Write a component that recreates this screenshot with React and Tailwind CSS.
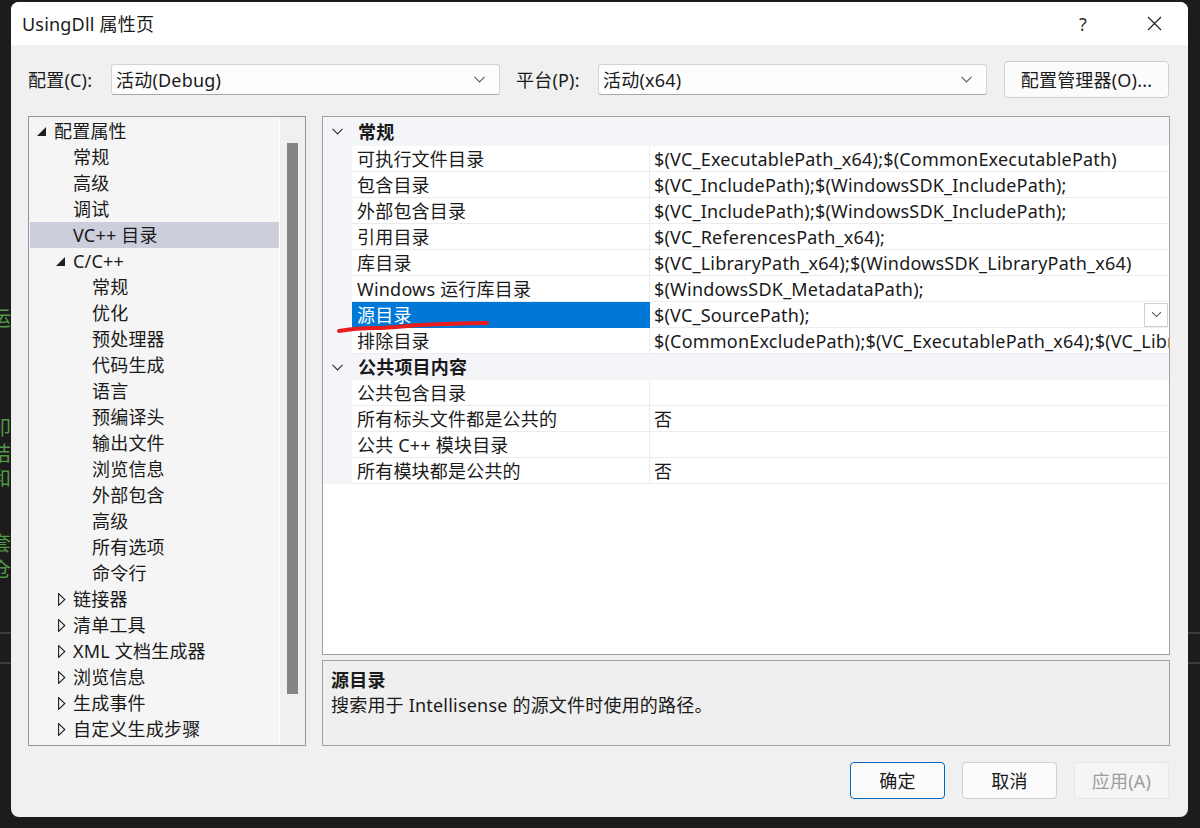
import React from 'react';

const TREE = [
  { label: '配置属性', level: 0, state: 'open' },
  { label: '常规', level: 1 },
  { label: '高级', level: 1 },
  { label: '调试', level: 1 },
  { label: 'VC++ 目录', level: 1, selected: true },
  { label: 'C/C++', level: 1, state: 'open' },
  { label: '常规', level: 2 },
  { label: '优化', level: 2 },
  { label: '预处理器', level: 2 },
  { label: '代码生成', level: 2 },
  { label: '语言', level: 2 },
  { label: '预编译头', level: 2 },
  { label: '输出文件', level: 2 },
  { label: '浏览信息', level: 2 },
  { label: '外部包含', level: 2 },
  { label: '高级', level: 2 },
  { label: '所有选项', level: 2 },
  { label: '命令行', level: 2 },
  { label: '链接器', level: 1, state: 'closed' },
  { label: '清单工具', level: 1, state: 'closed' },
  { label: 'XML 文档生成器', level: 1, state: 'closed' },
  { label: '浏览信息', level: 1, state: 'closed' },
  { label: '生成事件', level: 1, state: 'closed' },
  { label: '自定义生成步骤', level: 1, state: 'closed' },
];

const INDENT = { 0: 'pl-[7px]', 1: 'pl-[26px]', 2: 'pl-[45px]' };

const GENERAL = [
  ['可执行文件目录', '$(VC_ExecutablePath_x64);$(CommonExecutablePath)'],
  ['包含目录', '$(VC_IncludePath);$(WindowsSDK_IncludePath);'],
  ['外部包含目录', '$(VC_IncludePath);$(WindowsSDK_IncludePath);'],
  ['引用目录', '$(VC_ReferencesPath_x64);'],
  ['库目录', '$(VC_LibraryPath_x64);$(WindowsSDK_LibraryPath_x64)'],
  ['Windows 运行库目录', '$(WindowsSDK_MetadataPath);'],
  ['源目录', '$(VC_SourcePath);', true],
  ['排除目录', '$(CommonExcludePath);$(VC_ExecutablePath_x64);$(VC_LibraryPath_x64)'],
];

const PUBLIC = [
  ['公共包含目录', ''],
  ['所有标头文件都是公共的', '否'],
  ['公共 C++ 模块目录', ''],
  ['所有模块都是公共的', '否'],
];

// 背景里露出来的一点绿色代码（被对话框挡住，只剩边角）
const BG_GLYPHS = [
  { t: '“', top: 'top-[264px]' },
  { t: '运', top: 'top-[309px]' },
  { t: '印', top: 'top-[418px]' },
  { t: '拮', top: 'top-[444px]' },
  { t: '和', top: 'top-[469px]' },
  { t: '套', top: 'top-[534px]' },
  { t: '仓', top: 'top-[560px]' },
];

function Chevron({ className = '' }) {
  return (
    <svg width="11" height="7" viewBox="0 0 11 7" className={className}>
      <path d="M0.5 0.8 L5.5 5.8 L10.5 0.8" fill="none" stroke="currentColor" strokeWidth="1.2" />
    </svg>
  );
}

function Select({ value }) {
  return (
    <div className="w-[389px] shrink-0 h-[31px] flex items-center justify-between pl-[4px] pr-[14px] bg-[#fdfdfd] border border-[#d4d4d4] border-b-[#a8a8a8] rounded-[3px]">
      <span>{value}</span>
      <Chevron className="text-[#606060]" />
    </div>
  );
}

function TreeRow({ item }) {
  return (
    <div
      className={`h-[26px] flex items-center ${INDENT[item.level]} ${
        item.selected ? 'bg-[#cccedb]' : ''
      }`}
    >
      <span className="w-[17px] h-[26px] flex items-center">
        {item.state === 'open' && (
          <svg width="9" height="9" viewBox="0 0 9 9" className="mt-[1px]">
            <polygon points="9,0 9,9 0,9" fill="#1e1e1e" />
          </svg>
        )}
        {item.state === 'closed' && (
          <svg width="8" height="13" viewBox="0 0 8 13" className="ml-[2px]">
            <polygon points="0.6,0.6 6.8,6.5 0.6,12.4" fill="none" stroke="#1e1e1e" strokeWidth="1.1" />
          </svg>
        )}
      </span>
      <span className="whitespace-nowrap">{item.label}</span>
    </div>
  );
}

function CategoryRow({ label, tall }) {
  return (
    <div className={`flex items-center bg-[#f3f5f9] ${tall ? 'h-[29px]' : 'h-[26px]'}`}>
      <span className="w-[29px] flex justify-center">
        <Chevron className="text-[#333]" />
      </span>
      <span className="pl-[6px] font-bold">{label}</span>
    </div>
  );
}

function PropRow({ name, value, selected }) {
  return (
    <div className="flex h-[26px]">
      <div className="w-[29px] bg-[#f3f5f9] shrink-0" />
      <div
        className={`w-[298px] shrink-0 flex items-center pl-[5px] whitespace-nowrap ${
          selected ? 'bg-[#0078d7] text-white' : 'bg-white border-b border-r border-[#ececec]'
        }`}
      >
        {name}
      </div>
      <div className="flex-1 min-w-0 flex items-center justify-between bg-white border-b border-[#ececec] pl-[4px] overflow-hidden">
        <span className="whitespace-nowrap">{value}</span>
        {selected && (
          <span className="shrink-0 w-[24px] h-[24px] mr-[1px] flex items-center justify-center bg-white border border-[#cfcfcf]">
            <Chevron className="text-[#555] scale-90" />
          </span>
        )}
      </div>
    </div>
  );
}

function Button({ children, kind }) {
  const cls =
    kind === 'primary'
      ? 'border-[#0067c0] bg-[#fbfbfb] text-[#1a1a1a]'
      : kind === 'disabled'
      ? 'border-[#e6e6e6] bg-[#f5f5f5] text-[#9d9d9d]'
      : 'border-[#d0d0d0] bg-[#fbfbfb] text-[#1a1a1a]';
  return (
    <div className={`w-[95px] h-[37px] flex items-center justify-center rounded-[4px] border ${cls}`}>
      {children}
    </div>
  );
}

export default function App() {
  return (
    <div className="relative w-[1200px] h-[828px] overflow-hidden bg-[#1c1c1c] pt-[2px] pl-[11px] font-['Noto_Sans','Noto_Sans_CJK_SC',sans-serif] text-[18px] leading-none tracking-[0.2px] text-[#1a1a1a]">
      {/* 背景装饰 */}
      {BG_GLYPHS.map((g) => (
        <span key={g.top} className={`absolute left-[-9px] ${g.top} text-[20px] text-[#4f9a44]`}>
          {g.t}
        </span>
      ))}
      <div className="absolute left-0 top-[632px] w-[11px] h-[2px] bg-[#3b3b3b]" />
      <div className="absolute left-0 top-[662px] w-[11px] h-[2px] bg-[#3b3b3b]" />
      <div className="absolute right-0 top-[632px] w-[12px] h-[2px] bg-[#3b3b3b]" />
      <div className="absolute right-0 top-[662px] w-[12px] h-[2px] bg-[#3b3b3b]" />

      {/* 对话框 */}
      <div className="relative w-[1177px] h-[815px] rounded-[8px] bg-[#f0f0f0] overflow-hidden flex flex-col">
        <div className="h-[43px] bg-white flex items-center pl-[11px] pr-[26px]">
          <span className="flex-1">UsingDll 属性页</span>
          <span className="text-[#333] mr-[60px]">?</span>
          <svg width="15" height="15" viewBox="0 0 15 15">
            <path d="M1 1 L14 14 M14 1 L1 14" stroke="#222" strokeWidth="1.2" />
          </svg>
        </div>

        <div className="flex-1 min-w-0 flex flex-col pl-[17px] pr-[18px]">
          <div className="mt-[16px] h-[37px] flex items-center">
            <span className="w-[83px] shrink-0">配置(C):</span>
            <Select value="活动(Debug)" />
            <span className="w-[82px] shrink-0 ml-[16px]">平台(P):</span>
            <Select value="活动(x64)" />
            <div className="ml-[17px] w-[165px] shrink-0 h-[37px] flex items-center justify-center rounded-[4px] border border-[#d0d0d0] bg-[#fbfbfb]">
              配置管理器(O)...
            </div>
          </div>

          <div className="mt-[18px] h-[630px] flex gap-[16px]">
            {/* 左侧树 */}
            <div className="w-[278px] shrink-0 border border-[#8f96a3] bg-[#f5f5f5] flex">
              <div className="flex-1 min-w-0 pt-[1px] pl-[1px]">
                {TREE.map((item, i) => (
                  <TreeRow key={i} item={item} />
                ))}
              </div>
              <div className="w-[26px] shrink-0 border-l border-white bg-[#f0f0f0] pt-[26px] pl-[7px]">
                <div className="w-[11px] h-[551px] bg-[#858585]" />
              </div>
            </div>

            {/* 右侧属性表 */}
            <div className="flex-1 min-w-0 flex flex-col gap-[5px]">
              <div className="h-[539px] border border-[#a0a0a0] bg-white overflow-hidden">
                <CategoryRow label="常规" tall />
                {GENERAL.map(([n, v, s]) => (
                  <PropRow key={n} name={n} value={v} selected={s} />
                ))}
                <CategoryRow label="公共项目内容" />
                {PUBLIC.map(([n, v]) => (
                  <PropRow key={n} name={n} value={v} />
                ))}
              </div>
              <div className="flex-1 border border-[#a0a0a0] bg-[#efefef] px-[8px] pt-[7px]">
                <div className="font-bold h-[24px] flex items-center">源目录</div>
                <div className="h-[26px] flex items-center">搜索用于 Intellisense 的源文件时使用的路径。</div>
              </div>
            </div>
          </div>

          <div className="mt-[16px] flex justify-end gap-[17px] pr-[1px]">
            <Button kind="primary">确定</Button>
            <Button>取消</Button>
            <Button kind="disabled">应用(A)</Button>
          </div>
        </div>
      </div>

      {/* 红色手绘标记 */}
      <svg className="absolute left-0 top-0 pointer-events-none" width="1200" height="828" viewBox="0 0 1200 828">
        <path
          d="M339 331 C 350 329, 362 328, 376 328 C 392 328, 405 326, 420 325 C 445 324, 468 323, 487 323"
          fill="none"
          stroke="#e81d1d"
          strokeWidth="4"
          strokeLinecap="round"
        />
      </svg>
    </div>
  );
}
